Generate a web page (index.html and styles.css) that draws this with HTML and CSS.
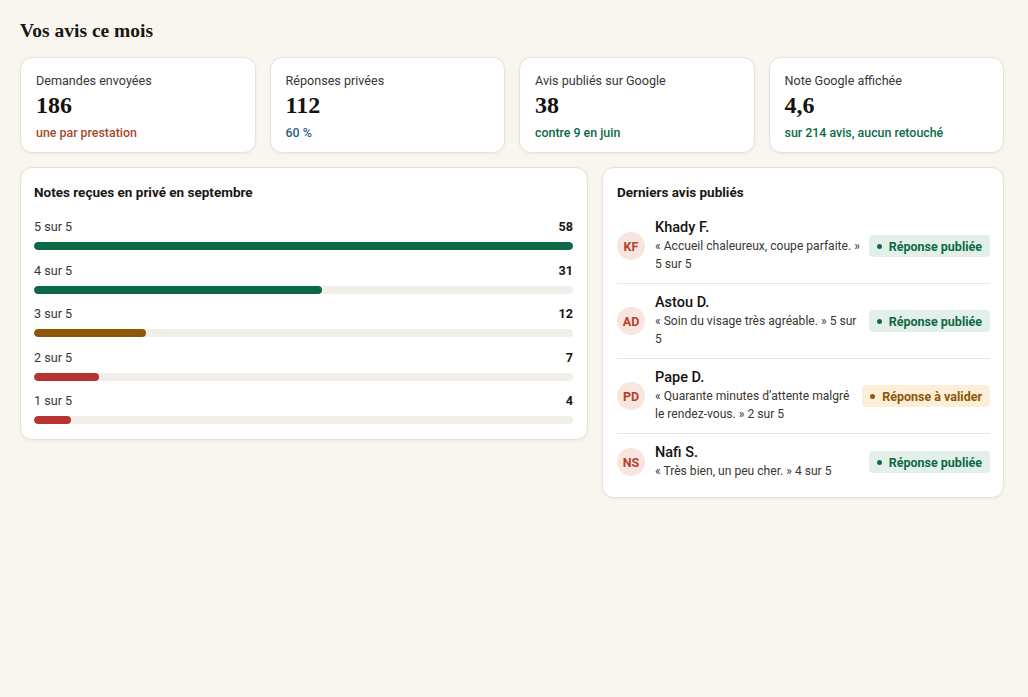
FILE: index.html
```html
<!DOCTYPE html>
<html lang="fr">
<head>
<meta charset="utf-8">
<title>Vos avis ce mois</title>
<link rel="stylesheet" href="styles.css">
</head>
<body>
<main class="page">
  <h1 class="page-title">Vos avis ce mois</h1>

  <section class="stats">
    <div class="card stat">
      <div class="stat-label">Demandes envoyées</div>
      <div class="stat-value">186</div>
      <div class="stat-sub sub-red">une par prestation</div>
    </div>
    <div class="card stat">
      <div class="stat-label">Réponses privées</div>
      <div class="stat-value">112</div>
      <div class="stat-sub sub-blue">60 %</div>
    </div>
    <div class="card stat">
      <div class="stat-label">Avis publiés sur Google</div>
      <div class="stat-value">38</div>
      <div class="stat-sub sub-green">contre 9 en juin</div>
    </div>
    <div class="card stat">
      <div class="stat-label">Note Google affichée</div>
      <div class="stat-value">4,6</div>
      <div class="stat-sub sub-green">sur 214 avis, aucun retouché</div>
    </div>
  </section>

  <section class="panels">
    <div class="card panel panel-chart">
      <h2 class="panel-title">Notes reçues en privé en septembre</h2>
      <div class="bars">
        <div class="bar-row">
          <div class="bar-head"><span>5 sur 5</span><strong>58</strong></div>
          <div class="track"><div class="fill fill-green" style="width:100%"></div></div>
        </div>
        <div class="bar-row">
          <div class="bar-head"><span>4 sur 5</span><strong>31</strong></div>
          <div class="track"><div class="fill fill-green" style="width:53.45%"></div></div>
        </div>
        <div class="bar-row">
          <div class="bar-head"><span>3 sur 5</span><strong>12</strong></div>
          <div class="track"><div class="fill fill-brown" style="width:20.69%"></div></div>
        </div>
        <div class="bar-row">
          <div class="bar-head"><span>2 sur 5</span><strong>7</strong></div>
          <div class="track"><div class="fill fill-red" style="width:12.07%"></div></div>
        </div>
        <div class="bar-row">
          <div class="bar-head"><span>1 sur 5</span><strong>4</strong></div>
          <div class="track"><div class="fill fill-red" style="width:6.9%"></div></div>
        </div>
      </div>
    </div>

    <div class="card panel panel-list">
      <h2 class="panel-title">Derniers avis publiés</h2>
      <ul class="reviews">
        <li class="review">
          <span class="avatar">KF</span>
          <div class="review-body">
            <div class="review-name">Khady F.</div>
            <div class="review-text">« Accueil chaleureux, coupe parfaite. » 5 sur 5</div>
          </div>
          <span class="badge badge-ok"><i class="dot"></i>Réponse publiée</span>
        </li>
        <li class="review">
          <span class="avatar">AD</span>
          <div class="review-body">
            <div class="review-name">Astou D.</div>
            <div class="review-text">« Soin du visage très agréable. » 5 sur 5</div>
          </div>
          <span class="badge badge-ok"><i class="dot"></i>Réponse publiée</span>
        </li>
        <li class="review">
          <span class="avatar">PD</span>
          <div class="review-body">
            <div class="review-name">Pape D.</div>
            <div class="review-text">« Quarante minutes d’attente malgré le rendez-vous. » 2 sur 5</div>
          </div>
          <span class="badge badge-wait"><i class="dot"></i>Réponse à valider</span>
        </li>
        <li class="review">
          <span class="avatar">NS</span>
          <div class="review-body">
            <div class="review-name">Nafi S.</div>
            <div class="review-text">« Très bien, un peu cher. » 4 sur 5</div>
          </div>
          <span class="badge badge-ok"><i class="dot"></i>Réponse publiée</span>
        </li>
      </ul>
    </div>
  </section>
</main>
</body>
</html>
```

FILE: styles.css
```css
* { box-sizing: border-box; }

html, body {
  margin: 0;
  background: #f9f6f0;
}

body {
  font-family: "Roboto", "Liberation Sans", sans-serif;
  color: #1c1a17;
}

.page {
  padding: 20px 24px 20px 20px;
}

.page-title {
  margin: 0 0 15px;
  font-family: "Liberation Serif", "DejaVu Serif", serif;
  font-weight: 700;
  font-size: 19.5px;
  line-height: 22px;
  color: #1a1714;
}

.card {
  background: #fff;
  border: 1px solid #e8e2d8;
  border-radius: 12px;
  box-shadow: 0 1px 3px rgba(60, 45, 20, 0.06);
}

.stats {
  display: grid;
  grid-template-columns: repeat(4, 1fr);
  gap: 14px;
}

.stat {
  padding: 15px 15px 11px;
}

.stat-label {
  font-size: 12.6px;
  line-height: 16px;
  color: #3a3632;
}

.stat-value {
  margin-top: 2px;
  font-family: "Liberation Serif", "DejaVu Serif", serif;
  font-weight: 700;
  font-size: 24px;
  line-height: 28px;
  color: #15120f;
}

.stat-sub {
  margin-top: 6px;
  font-size: 12.4px;
  line-height: 16px;
  font-weight: 500;
}

.sub-red { color: #a84a2d; }
.sub-blue { color: #2a5d86; }
.sub-green { color: #0d6a46; }

.panels {
  margin-top: 14px;
  display: grid;
  grid-template-columns: 568fr 402fr;
  gap: 14px;
  align-items: start;
}

.panel {
  padding: 15px 14px 15px 13px;
}

.panel-title {
  margin: 0;
  font-size: 13.5px;
  line-height: 18px;
  font-weight: 700;
  color: #1a1714;
}

.bars {
  margin-top: 18px;
  display: flex;
  flex-direction: column;
  gap: 12.6px;
}

.bar-head {
  display: flex;
  justify-content: space-between;
  font-size: 12.6px;
  line-height: 16px;
  color: #3a3632;
  margin-bottom: 7px;
}

.bar-head strong {
  color: #1a1714;
  font-weight: 700;
}

.track {
  height: 8px;
  border-radius: 4px;
  background: #f2efea;
  overflow: hidden;
}

.fill {
  height: 100%;
  border-radius: 4px;
}

.fill-green { background: #0b6a45; }
.fill-brown { background: #8c5709; }
.fill-red { background: #b73232; }

.panel-list {
  padding: 15px 13px 7px 14px;
}

.reviews {
  list-style: none;
  margin: 8px 0 0;
  padding: 0;
}

.review {
  display: flex;
  align-items: center;
  gap: 10px;
  padding: 10px 0;
  border-top: 1px solid #ebe6de;
}

.review:first-child {
  border-top: none;
}

.avatar {
  flex: none;
  width: 28px;
  height: 28px;
  border-radius: 50%;
  background: #f8e5df;
  color: #b2432b;
  font-size: 12.5px;
  font-weight: 700;
  display: flex;
  align-items: center;
  justify-content: center;
}

.review-body {
  flex: 1;
  min-width: 0;
  margin-right: -4.5px;
}

.review-name {
  font-size: 14.5px;
  line-height: 18px;
  font-weight: 500;
  color: #15120f;
}

.review-text {
  font-size: 12.1px;
  line-height: 18px;
  color: #3a3632;
}

.badge {
  flex: none;
  display: inline-flex;
  align-items: center;
  gap: 7px;
  height: 22px;
  padding: 0 8px;
  border-radius: 4px;
  font-size: 12.5px;
  font-weight: 700;
}

.dot {
  width: 5px;
  height: 5px;
  border-radius: 50%;
  background: currentColor;
}

.badge-ok {
  background: #e3f0ea;
  color: #0d6a46;
}

.badge-wait {
  background: #fdeed8;
  color: #8c5709;
}
```
